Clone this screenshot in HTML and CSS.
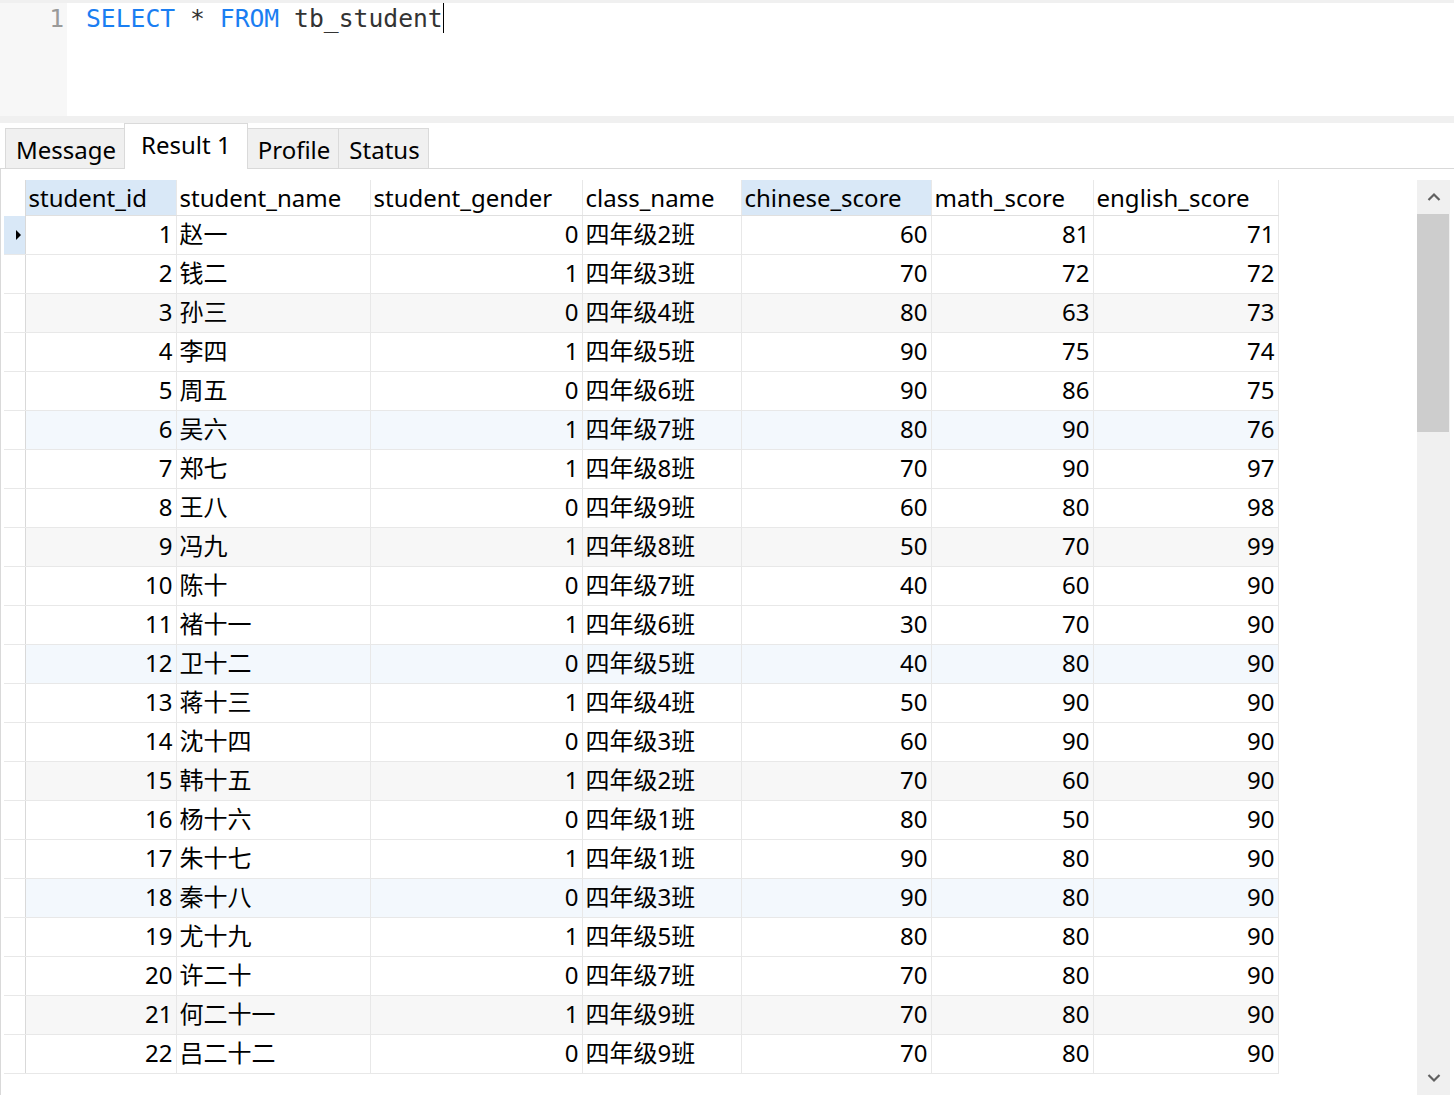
FILE: index.html
```html
<!DOCTYPE html>
<html>
<head>
<meta charset="utf-8">
<link rel="stylesheet" href="styles.css">
</head>
<body>
<div class="app">
  <div class="editor">
    <div class="gutter"><span class="lnum">1</span></div>
    <div class="code"><span class="kw">SELECT</span> * <span class="kw">FROM</span> tb_student<span class="caret"></span></div>
  </div>
  <div class="band"></div>
  <div class="tabs">
    <div class="tab">Message</div>
    <div class="tab active">Result 1</div>
    <div class="tab">Profile</div>
    <div class="tab">Status</div>
  </div>
  <div class="panel">
    <div class="gridwrap">
      <table class="grid">
        <colgroup>
          <col class="c-ind"><col class="c-id"><col class="c-name"><col class="c-gender"><col class="c-class"><col class="c-chinese"><col class="c-math"><col class="c-english">
        </colgroup>
        <thead>
          <tr>
            <th class="ind"></th>
            <th class="hl">student_id</th>
            <th>student_name</th>
            <th>student_gender</th>
            <th>class_name</th>
            <th class="hl">chinese_score</th>
            <th>math_score</th>
            <th>english_score</th>
          </tr>
        </thead>
        <tbody id="rows"></tbody>
      </table>
    </div>
    <div class="scrollbar">
      <div class="sb-btn"><svg width="14" height="10" viewBox="0 0 14 10"><path d="M1.5 8 L7 2.5 L12.5 8" fill="none" stroke="#606060" stroke-width="2.2"/></svg></div>
      <div class="sb-thumb"></div>
      <div class="sb-track"></div>
      <div class="sb-btn"><svg width="14" height="10" viewBox="0 0 14 10"><path d="M1.5 2 L7 7.5 L12.5 2" fill="none" stroke="#606060" stroke-width="2.2"/></svg></div>
    </div>
  </div>
</div>
<script src="script.js"></script>
</body>
</html>
```
FILE: script.js
```js
var data = [
  [1,"赵一",0,"四年级2班",60,81,71],
  [2,"钱二",1,"四年级3班",70,72,72],
  [3,"孙三",0,"四年级4班",80,63,73],
  [4,"李四",1,"四年级5班",90,75,74],
  [5,"周五",0,"四年级6班",90,86,75],
  [6,"吴六",1,"四年级7班",80,90,76],
  [7,"郑七",1,"四年级8班",70,90,97],
  [8,"王八",0,"四年级9班",60,80,98],
  [9,"冯九",1,"四年级8班",50,70,99],
  [10,"陈十",0,"四年级7班",40,60,90],
  [11,"褚十一",1,"四年级6班",30,70,90],
  [12,"卫十二",0,"四年级5班",40,80,90],
  [13,"蒋十三",1,"四年级4班",50,90,90],
  [14,"沈十四",0,"四年级3班",60,90,90],
  [15,"韩十五",1,"四年级2班",70,60,90],
  [16,"杨十六",0,"四年级1班",80,50,90],
  [17,"朱十七",1,"四年级1班",90,80,90],
  [18,"秦十八",0,"四年级3班",90,80,90],
  [19,"尤十九",1,"四年级5班",80,80,90],
  [20,"许二十",0,"四年级7班",70,80,90],
  [21,"何二十一",1,"四年级9班",70,80,90],
  [22,"吕二十二",0,"四年级9班",70,80,90]
];
var tb = document.getElementById("rows");
var html = "";
data.forEach(function (r, i) {
  var n = i + 1;
  var cls = "";
  if (n % 6 === 0) cls = "tint-blue";
  else if (n % 3 === 0) cls = "tint-gray";
  html += '<tr class="' + cls + '">' +
    '<td class="ind' + (n === 1 ? ' sel' : '') + '">' + (n === 1 ? '<span class="arrow"></span>' : '') + '</td>' +
    '<td class="num">' + r[0] + '</td>' +
    '<td>' + r[1] + '</td>' +
    '<td class="num">' + r[2] + '</td>' +
    '<td>' + r[3] + '</td>' +
    '<td class="num">' + r[4] + '</td>' +
    '<td class="num">' + r[5] + '</td>' +
    '<td class="num">' + r[6] + '</td>' +
    '</tr>';
});
tb.innerHTML = html;
```
FILE: styles.css
```css
html, body {
  margin: 0;
  padding: 0;
  background: #fff;
}
body {
  width: 1454px;
  height: 1095px;
  overflow: hidden;
  font-family: "Noto Sans", "Noto Sans CJK SC", sans-serif;
  color: #000;
}
.app {
  display: flex;
  flex-direction: column;
  height: 1095px;
}
.editor {
  display: flex;
  height: 113px;
  border-top: 3px solid #f0f0f0;
  background: #fff;
}
.gutter {
  width: 67px;
  background: #f7f7f7;
  text-align: right;
  box-sizing: border-box;
  padding-right: 3px;
}
.lnum, .code {
  font-family: "DejaVu Sans Mono", "Liberation Mono", monospace;
  font-size: 24.7px;
  line-height: 32px;
}
.lnum {
  color: #9a9a9a;
}
.code {
  padding-left: 19px;
  color: #333;
  white-space: pre;
}
.kw {
  color: #1a7ef2;
}
.caret {
  display: inline-block;
  width: 1px;
  height: 30px;
  background: #000;
  vertical-align: -6px;
}
.band {
  height: 7px;
  background: #f0f0f0;
}
.tabs {
  display: flex;
  align-items: flex-end;
  height: 45px;
  padding-left: 5px;
  font-size: 24px;
}
.tab {
  height: 40px;
  box-sizing: border-box;
  padding: 0 8px 0 10px;
  background: #f0f0f0;
  border: 1px solid #dadada;
  border-bottom: none;
  line-height: 42px;
  margin-left: -1px;
}
.tab:first-child {
  margin-left: 0;
}
.tab.active {
  height: 46px;
  background: #fff;
  line-height: 42px;
  padding: 0 16px 0 16px;
  margin-bottom: -1px;
  position: relative;
  z-index: 1;
}
.panel {
  flex: 1;
  display: flex;
  border-top: 1px solid #d9d9d9;
  border-left: 1px solid #d9d9d9;
  padding-top: 11px;
  min-height: 0;
}
.gridwrap {
  flex: 1;
  padding-left: 3px;
}
.grid {
  border-collapse: collapse;
  table-layout: fixed;
  width: 1274px;
  font-size: 24px;
}
.c-ind { width: 21px; }
.c-id { width: 151px; }
.c-name { width: 194px; }
.c-gender { width: 212px; }
.c-class { width: 159px; }
.c-chinese { width: 190px; }
.c-math { width: 162px; }
.c-english { width: 185px; }
.grid th, .grid td {
  padding: 0 3px;
  white-space: nowrap;
  overflow: hidden;
  border-right: 1px solid #e8e8e8;
  border-bottom: 1px solid #e8e8e8;
}
.grid th {
  height: 35px;
  font-weight: normal;
  text-align: left;
  line-height: 35px;
  border-bottom-color: #e0e0e0;
}
.grid th.ind {
  border-bottom: none;
}
.grid th.hl {
  background: #d9e8f7;
}
.grid td {
  height: 36px;
  line-height: 36px;
  padding-bottom: 2px;
}
.grid .ind {
  padding: 0;
  border-right-color: #d9d9d9;
  background: #fff;
  position: relative;
}
.grid td.ind.sel {
  background: #d9e8f7;
}
.arrow {
  position: absolute;
  left: 12px;
  top: 14px;
  width: 0;
  height: 0;
  border-top: 5px solid transparent;
  border-bottom: 5px solid transparent;
  border-left: 5px solid #000;
}
.grid td.num {
  text-align: right;
}
.tint-gray td:not(.ind) {
  background: #f7f7f7;
}
.tint-blue td:not(.ind) {
  background: #f3f8fd;
}
.scrollbar {
  width: 33px;
  margin-right: 4px;
  background: #f0f0f0;
  display: flex;
  flex-direction: column;
}
.sb-btn {
  height: 34px;
  display: flex;
  align-items: center;
  justify-content: center;
}
.sb-thumb {
  height: 218px;
  background: #cdcdcd;
  margin-right: 1px;
}
.sb-track {
  flex: 1;
}
```
